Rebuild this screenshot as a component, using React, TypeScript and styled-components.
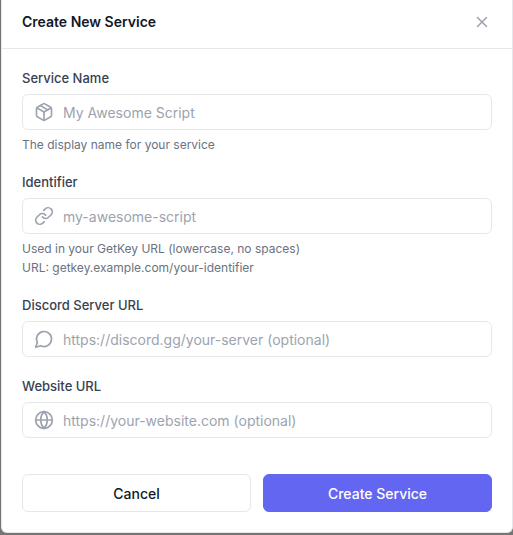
import React from "react";
import styled, { createGlobalStyle } from "styled-components";
import { Globe, Link, Package, X } from "lucide-react";

const GlobalStyle = createGlobalStyle`
  *, *::before, *::after { box-sizing: border-box; }
  body {
    margin: 0;
    background: #757575;
    color: #111827;
    font-family: Inter, sans-serif;
  }
`;

const Backdrop = styled.div`
  min-height: 100vh;
  padding-left: 1px;
`;

const Dialog = styled.section`
  background: #ffffff;
  border: 1px solid #e5e7eb;
  border-top: 0;
  border-radius: 0 0 6px 6px;
`;

const Header = styled.header`
  display: flex;
  align-items: center;
  justify-content: space-between;
  padding: 8px 20px 12px;
  border-bottom: 1px solid #e5e7eb;
`;

const Title = styled.h2`
  margin: 0;
  font-size: 14px;
  font-weight: 600;
  line-height: 28px;
`;

const CloseButton = styled.button`
  display: flex;
  padding: 1px;
  border: 0;
  background: none;
  color: #9ca3af;
  cursor: pointer;
`;

const Form = styled.form`
  padding: 20px;
`;

const Fields = styled.div`
  display: grid;
  gap: 20px;
`;

const Label = styled.label`
  display: block;
  margin-bottom: 6px;
  color: #374151;
  font-size: 13px;
  font-weight: 500;
  line-height: 19px;
`;

const InputShell = styled.div`
  display: flex;
  align-items: center;
  gap: 9px;
  height: 36px;
  padding: 0 11px;
  border: 1px solid #e5e7eb;
  border-radius: 6px;
  color: #9ca3af;

  svg { flex: none; }
  &:focus-within { border-color: #6366f1; }
`;

const Input = styled.input`
  flex: 1;
  min-width: 0;
  padding: 0;
  border: 0;
  outline: 0;
  background: transparent;
  color: #111827;
  font: 14px Inter, sans-serif;

  &::placeholder { color: #9ca3af; opacity: 1; }
`;

const Hint = styled.p`
  margin: 6px 0 0;
  color: #6b7280;
  font-size: 12px;
  line-height: 17px;

  & + & { margin-top: 2px; }
`;

const Actions = styled.div`
  display: grid;
  grid-template-columns: 1fr 1fr;
  gap: 12px;
  margin-top: 36px;
`;

const Button = styled.button<{ $primary?: boolean }>`
  height: 38px;
  padding: 0 16px;
  border: 1px solid ${(p) => (p.$primary ? "#6366f1" : "#e5e7eb")};
  border-radius: 6px;
  background: ${(p) => (p.$primary ? "#6366f1" : "#ffffff")};
  color: ${(p) => (p.$primary ? "#ffffff" : "#111827")};
  font: 500 14px Inter, sans-serif;
  cursor: pointer;
`;

function ChatBubble() {
  return (
    <svg
      width="20"
      height="20"
      viewBox="0 0 24 24"
      fill="none"
      stroke="currentColor"
      strokeWidth="2"
      strokeLinecap="round"
      strokeLinejoin="round"
      aria-hidden
    >
      <path d="M7.9 20A9 9 0 1 0 4 16.1L2 22Z" />
    </svg>
  );
}

interface FieldProps {
  id: string;
  label: string;
  placeholder: string;
  icon: React.ReactNode;
  hints?: string[];
}

function Field({ id, label, placeholder, icon, hints = [] }: FieldProps) {
  return (
    <div>
      <Label htmlFor={id}>{label}</Label>
      <InputShell>
        {icon}
        <Input id={id} name={id} type="text" placeholder={placeholder} />
      </InputShell>
      {hints.map((hint) => (
        <Hint key={hint}>{hint}</Hint>
      ))}
    </div>
  );
}

export default function App() {
  return (
    <>
      <GlobalStyle />
      <Backdrop>
        <Dialog role="dialog" aria-labelledby="dialog-title">
          <Header>
            <Title id="dialog-title">Create New Service</Title>
            <CloseButton type="button" aria-label="Close">
              <X size={18} />
            </CloseButton>
          </Header>
          <Form onSubmit={(e) => e.preventDefault()}>
            <Fields>
              <Field
                id="service-name"
                label="Service Name"
                placeholder="My Awesome Script"
                icon={<Package size={20} />}
                hints={["The display name for your service"]}
              />
              <Field
                id="identifier"
                label="Identifier"
                placeholder="my-awesome-script"
                icon={<Link size={20} />}
                hints={[
                  "Used in your GetKey URL (lowercase, no spaces)",
                  "URL: getkey.example.com/your-identifier",
                ]}
              />
              <Field
                id="discord-url"
                label="Discord Server URL"
                placeholder="https://discord.gg/your-server (optional)"
                icon={<ChatBubble />}
              />
              <Field
                id="website-url"
                label="Website URL"
                placeholder="https://your-website.com (optional)"
                icon={<Globe size={20} />}
              />
            </Fields>
            <Actions>
              <Button type="button">Cancel</Button>
              <Button type="submit" $primary>
                Create Service
              </Button>
            </Actions>
          </Form>
        </Dialog>
      </Backdrop>
    </>
  );
}
